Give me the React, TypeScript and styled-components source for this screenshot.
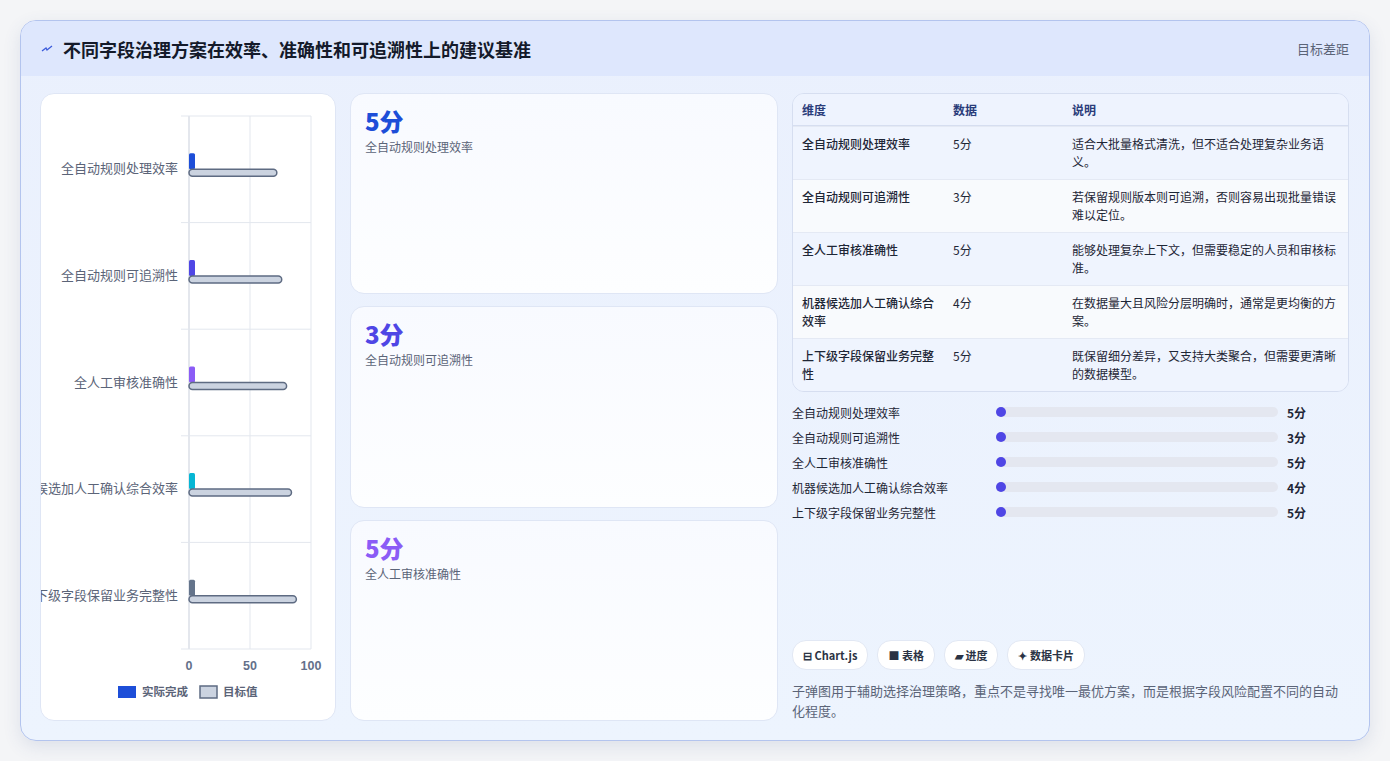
import React from "react";
import styled, {createGlobalStyle} from "styled-components";

const GlobalStyle = createGlobalStyle`
  html, body { margin: 0; padding: 0; background: #f4f5f7; }
  body { font-family: "Noto Sans CJK SC", "Noto Sans", sans-serif; }
`;

const Page = styled.div`
  width: 1390px;
  height: 761px;
  padding: 20px;
  box-sizing: border-box;
`;

const Card = styled.div`
  width: 1350px;
  height: 721px;
  box-sizing: border-box;
  border: 1px solid #b3c4ee;
  border-radius: 16px;
  overflow: hidden;
  background: linear-gradient(180deg, #eaf0fd 0%, #edf4fe 100%);
  box-shadow: 0 6px 18px rgba(60, 80, 140, 0.12);
  display: flex;
  flex-direction: column;
`;

const Header = styled.div`
  height: 55px;
  background: #dee7fd;
  display: flex;
  align-items: center;
  justify-content: space-between;
  padding: 0 20px;
`;

const Title = styled.h1`
  margin: 0;
  font-size: 18px;
  font-weight: 700;
  color: #141a2a;
  display: flex;
  align-items: center;
  gap: 10px;
`;

const HeaderTag = styled.span`
  font-size: 13px;
  color: #5b6478;
`;

const Body = styled.div`
  flex: 1;
  display: grid;
  grid-template-columns: 296px 428px 557px;
  gap: 14px;
  padding: 17px 19px 19px 19px;
  min-height: 0;
`;

const Panel = styled.div`
  background: #fff;
  border: 1px solid #dfe6f5;
  border-radius: 14px;
  overflow: hidden;
`;

const CardsCol = styled.div`
  display: grid;
  grid-template-rows: repeat(3, 1fr);
  gap: 12px;
`;

const StatCard = styled.div`
  background: linear-gradient(180deg, #f8faff 0%, #fdfeff 100%);
  border: 1px solid #dfe6f5;
  border-radius: 14px;
  padding: 12px 14px;
`;

const StatValue = styled.div<{ $color: string }>`
  font-size: 24px;
  font-weight: 800;
  color: ${p => p.$color};
  line-height: 30px;
`;

const StatLabel = styled.div`
  font-size: 12px;
  color: #5b6478;
  margin-top: 2px;
`;

const RightCol = styled.div`
  display: flex;
  flex-direction: column;
`;

const Table = styled.table`
  width: 100%;
  table-layout: fixed;
  border-collapse: separate;
  border-spacing: 0;
  border: 1px solid #d6def0;
  border-radius: 12px;
  overflow: hidden;
  font-size: 12px;
  color: #1e2636;
`;

const Th = styled.th<{ $w?: number }>`
  text-align: left;
  font-weight: 700;
  color: #2a3c7a;
  background: #eef3fe;
  padding: 7px 9px;
  border-bottom: 1px solid #d6def0;
  width: ${p => (p.$w ? `${p.$w}px` : "auto")};
`;

const Tr = styled.tr<{ $alt: boolean }>`
  background: ${p => (p.$alt ? "#f8fafd" : "#eff4fe")};
`;

const Td = styled.td<{ $bold?: boolean }>`
  padding: 8px 9px 8px 9px;
  vertical-align: top;
  line-height: 18px;
  font-weight: ${p => (p.$bold ? 500 : 400)};
  border-top: 1px solid #e4e9f4;
`;

const Progress = styled.div`
  margin-top: 11px;
  display: flex;
  flex-direction: column;
  gap: 7px;
`;

const ProgRow = styled.div`
  display: grid;
  grid-template-columns: 204px 282px 1fr;
  align-items: center;
  height: 18px;
  font-size: 12px;
  color: #1e2636;
`;

const Track = styled.div`
  height: 10px;
  border-radius: 5px;
  background: #e4e7f0;
  position: relative;
`;

const Fill = styled.div`
  position: absolute;
  left: 0;
  top: 0;
  height: 10px;
  border-radius: 5px;
  background: #4f46e5;
`;

const ProgValue = styled.span`
  font-weight: 700;
  padding-left: 9px;
`;

const Spacer = styled.div`
  flex: 1;
`;

const Chips = styled.div`
  display: flex;
  gap: 9px;
`;

const Chip = styled.span`
  height: 28px;
  padding: 0 10px;
  display: flex;
  align-items: center;
  gap: 4px;
  background: #fff;
  border: 1px solid #e2e8f4;
  border-radius: 14px;
  font-size: 11px;
  font-weight: 700;
  color: #2b3344;
`;

const Note = styled.p`
  margin: 11px 0 0;
  font-size: 13px;
  line-height: 20px;
  color: #5b6478;
`;

const rows = [
    {name: "全自动规则处理效率", v: "5分", d: "适合大批量格式清洗，但不适合处理复杂业务语义。", c: "#1d4ed8", t: 72},
    {name: "全自动规则可追溯性", v: "3分", d: "若保留规则版本则可追溯，否则容易出现批量错误难以定位。", c: "#4f46e5", t: 76},
    {name: "全人工审核准确性", v: "5分", d: "能够处理复杂上下文，但需要稳定的人员和审核标准。", c: "#8b5cf6", t: 80},
    {name: "机器候选加人工确认综合效率", v: "4分", d: "在数据量大且风险分层明确时，通常是更均衡的方案。", c: "#06b6d4", t: 84},
    {name: "上下级字段保留业务完整性", v: "5分", d: "既保留细分差异，又支持大类聚合，但需要更清晰的数据模型。", c: "#64748b", t: 88},
];

function BulletChart() {
    const x0 = 148, x1 = 270, top = 22, rowH = 106.6;
    const sx = (v: number) => x0 + (v / 100) * (x1 - x0);
    return (
        <svg width="296" height="627" viewBox="0 0 296 627">
            {[0, 50, 100].map(v => (
                <line key={v} x1={sx(v)} x2={sx(v)} y1={top} y2={top + rowH * 5} stroke={v === 0 ? "#c9cfdb" : "#e3e7ee"}/>
            ))}
            {[0, 1, 2, 3, 4, 5].map(i => (
                <line key={i} x1={x0 - 8} x2={x1} y1={top + rowH * i} y2={top + rowH * i} stroke="#e3e7ee"/>
            ))}
            {rows.map((r, i) => {
                const cy = top + rowH * i + rowH / 2;
                return (
                    <g key={r.name}>
                        <text x={x0 - 11} y={cy + 4} textAnchor="end" fontSize="13" fill="#5b6478"
                              fontFamily="Noto Sans CJK SC, sans-serif">{r.name}</text>
                        <rect x={x0} y={cy - 16} width={6} height={16} rx={1.5} fill={r.c}/>
                        <rect x={x0} y={cy} width={sx(r.t) - x0} height={7} rx={3.5} fill="#cbd3e0" stroke="#5e6b82" strokeWidth={1.5}/>
                    </g>
                );
            })}
            {[0, 50, 100].map(v => (
                <text key={v} x={sx(v)} y={576} textAnchor="middle" fontSize="12.5" fontWeight="700" fill="#64708a"
                      fontFamily="Liberation Sans, sans-serif">{v}</text>
            ))}
            <rect x={77} y={592} width={18} height={12} fill="#1d4ed8"/>
            <text x={101} y={602} fontSize="11.5" fill="#5b6478" fontWeight="700" fontFamily="Noto Sans CJK SC, sans-serif">实际完成</text>
            <rect x={159} y={592} width={17} height={12} fill="#cbd3e0" stroke="#5e6b82" strokeWidth={1.5}/>
            <text x={182} y={602} fontSize="11.5" fill="#5b6478" fontWeight="700" fontFamily="Noto Sans CJK SC, sans-serif">目标值</text>
        </svg>
    );
}

export default function App() {
    return (
        <Page>
            <GlobalStyle/>
            <Card>
                <Header>
                    <Title>
                        <svg width="12" height="12" viewBox="0 0 12 12">
                            <path d="M1 8 L5 5 L6 7 L11 3" stroke="#3b5bdb" strokeWidth="1.3" fill="none"/>
                        </svg>
                        不同字段治理方案在效率、准确性和可追溯性上的建议基准
                    </Title>
                    <HeaderTag>目标差距</HeaderTag>
                </Header>
                <Body>
                    <Panel>
                        <BulletChart/>
                    </Panel>
                    <CardsCol>
                        {rows.slice(0, 3).map(r => (
                            <StatCard key={r.name}>
                                <StatValue $color={r.c}>{r.v}</StatValue>
                                <StatLabel>{r.name}</StatLabel>
                            </StatCard>
                        ))}
                    </CardsCol>
                    <RightCol>
                        <Table>
                            <thead>
                            <tr>
                                <Th $w={133}>维度</Th>
                                <Th $w={101}>数据</Th>
                                <Th>说明</Th>
                            </tr>
                            </thead>
                            <tbody>
                            {rows.map((r, i) => (
                                <Tr key={r.name} $alt={i % 2 === 1}>
                                    <Td $bold>{r.name}</Td>
                                    <Td>{r.v}</Td>
                                    <Td>{r.d}</Td>
                                </Tr>
                            ))}
                            </tbody>
                        </Table>
                        <Progress>
                            {rows.map(r => (
                                <ProgRow key={r.name}>
                                    <span>{r.name}</span>
                                    <Track><Fill style={{width: 10}}/></Track>
                                    <ProgValue>{r.v}</ProgValue>
                                </ProgRow>
                            ))}
                        </Progress>
                        <Spacer/>
                        <Chips>
                            <Chip>⊟ Chart.js</Chip>
                            <Chip>■ 表格</Chip>
                            <Chip>▰ 进度</Chip>
                            <Chip>✦ 数据卡片</Chip>
                        </Chips>
                        <Note>子弹图用于辅助选择治理策略，重点不是寻找唯一最优方案，而是根据字段风险配置不同的自动化程度。</Note>
                    </RightCol>
                </Body>
            </Card>
        </Page>
    );
}
